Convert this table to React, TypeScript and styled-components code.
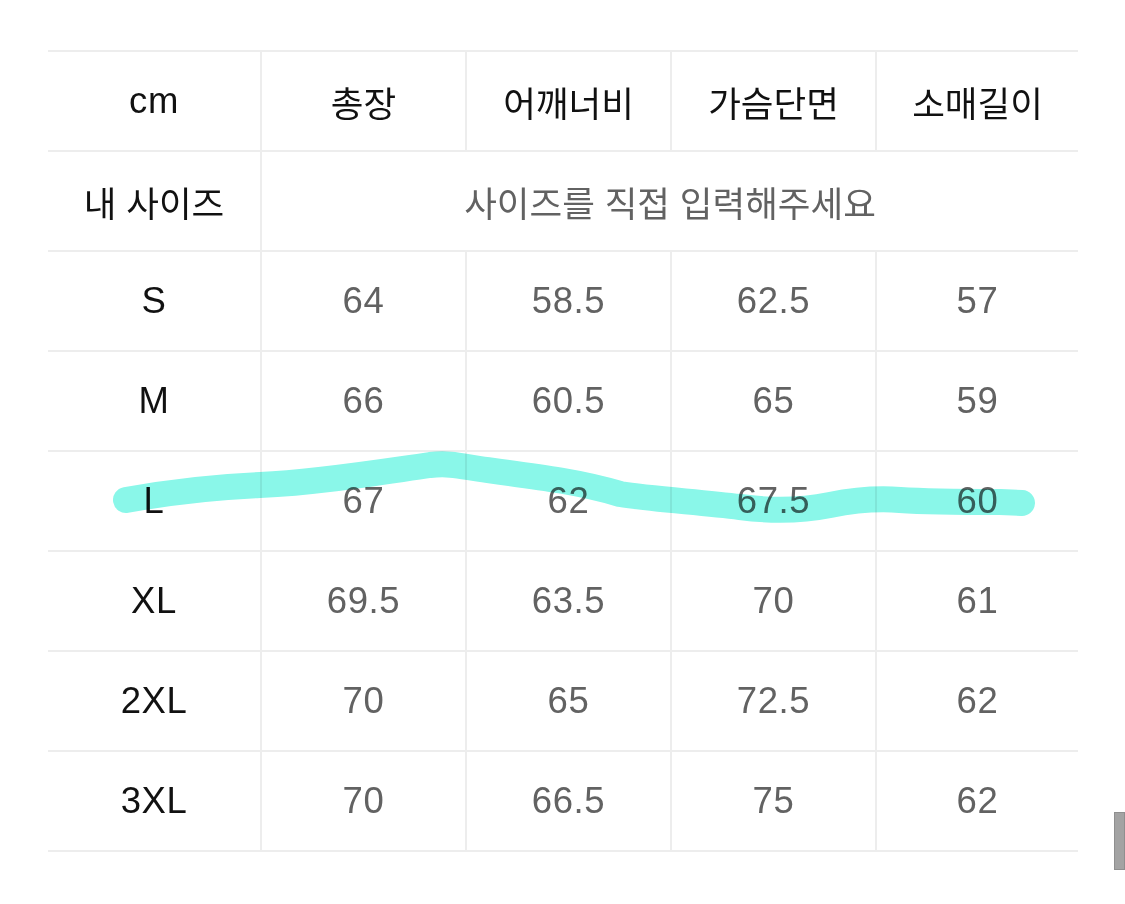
import React from "react";
import styled, { createGlobalStyle } from "styled-components";

const GlobalStyle = createGlobalStyle`
  html, body {
    margin: 0;
    padding: 0;
    background: #ffffff;
  }
  body {
    font-family: "Liberation Sans", "Noto Sans CJK KR", sans-serif;
  }
`;

const Page = styled.div`
  position: relative;
  width: 1125px;
  height: 904px;
  padding: 50px 0 0 48px;
  box-sizing: border-box;
  overflow: hidden;
`;

const Table = styled.div`
  display: grid;
  grid-template-columns: 212px 205px 205px 205px 203px;
  width: 1030px;
  border-top: 2px solid #ededed;
`;

const Cell = styled.div<{ $muted?: boolean; $span?: number; $first?: boolean; $korean?: boolean }>`
  height: 98px;
  display: flex;
  align-items: center;
  justify-content: center;
  border-bottom: 2px solid #ededed;
  border-left: ${(p) => (p.$first ? "none" : "2px solid #ededed")};
  grid-column: ${(p) => (p.$span ? `span ${p.$span}` : "auto")};
  font-family: "Liberation Sans", "Noto Sans CJK KR", sans-serif;
  font-size: ${(p) => (p.$korean ? "35.5px" : "36.5px")};
  letter-spacing: ${(p) => (p.$korean ? "0" : "0.6px")};
  font-weight: 400;
  color: ${(p) => (p.$muted ? "#626262" : "#111111")};
  white-space: nowrap;
`;

const Highlight = styled.svg`
  position: absolute;
  left: 0;
  top: 0;
  pointer-events: none;
  mix-blend-mode: multiply;
`;

const Scrollbar = styled.div`
  position: absolute;
  left: 1114px;
  top: 812px;
  width: 11px;
  height: 58px;
  background: #a3a3a3;
  border: 1px solid #8f8f8f;
  box-sizing: border-box;
`;

const headers = ["총장", "어깨너비", "가슴단면", "소매길이"];
const rows: [string, string[]][] = [
  ["S", ["64", "58.5", "62.5", "57"]],
  ["M", ["66", "60.5", "65", "59"]],
  ["L", ["67", "62", "67.5", "60"]],
  ["XL", ["69.5", "63.5", "70", "61"]],
  ["2XL", ["70", "65", "72.5", "62"]],
  ["3XL", ["70", "66.5", "75", "62"]],
];

export default function App() {
  return (
    <Page>
      <GlobalStyle />
      <Table>
        <Cell $first>cm</Cell>
        {headers.map((h) => (
          <Cell key={h} $korean>
            {h}
          </Cell>
        ))}
        <Cell $first $korean>
          내 사이즈
        </Cell>
        <Cell $span={4} $muted $korean>
          사이즈를 직접 입력해주세요
        </Cell>
        {rows.map(([size, vals]) => (
          <React.Fragment key={size}>
            <Cell $first>{size}</Cell>
            {vals.map((v, i) => (
              <Cell key={i} $muted>
                {v}
              </Cell>
            ))}
          </React.Fragment>
        ))}
      </Table>
      <Highlight width="1125" height="904" viewBox="0 0 1125 904">
        <path
          d="M126 500 C 170 492, 210 487, 260 485 C 320 482, 380 472, 430 465 C 450 463, 460 466, 480 469 C 540 477, 580 482, 620 494 C 650 499, 700 502, 740 507 C 770 511, 800 511, 830 505 C 855 500, 875 498, 900 500 C 930 502, 960 502, 1000 502 L 1022 503"
          fill="none"
          stroke="#8af7e9"
          strokeWidth="26"
          strokeLinecap="round"
          strokeLinejoin="round"
        />
      </Highlight>
      <Scrollbar />
    </Page>
  );
}
